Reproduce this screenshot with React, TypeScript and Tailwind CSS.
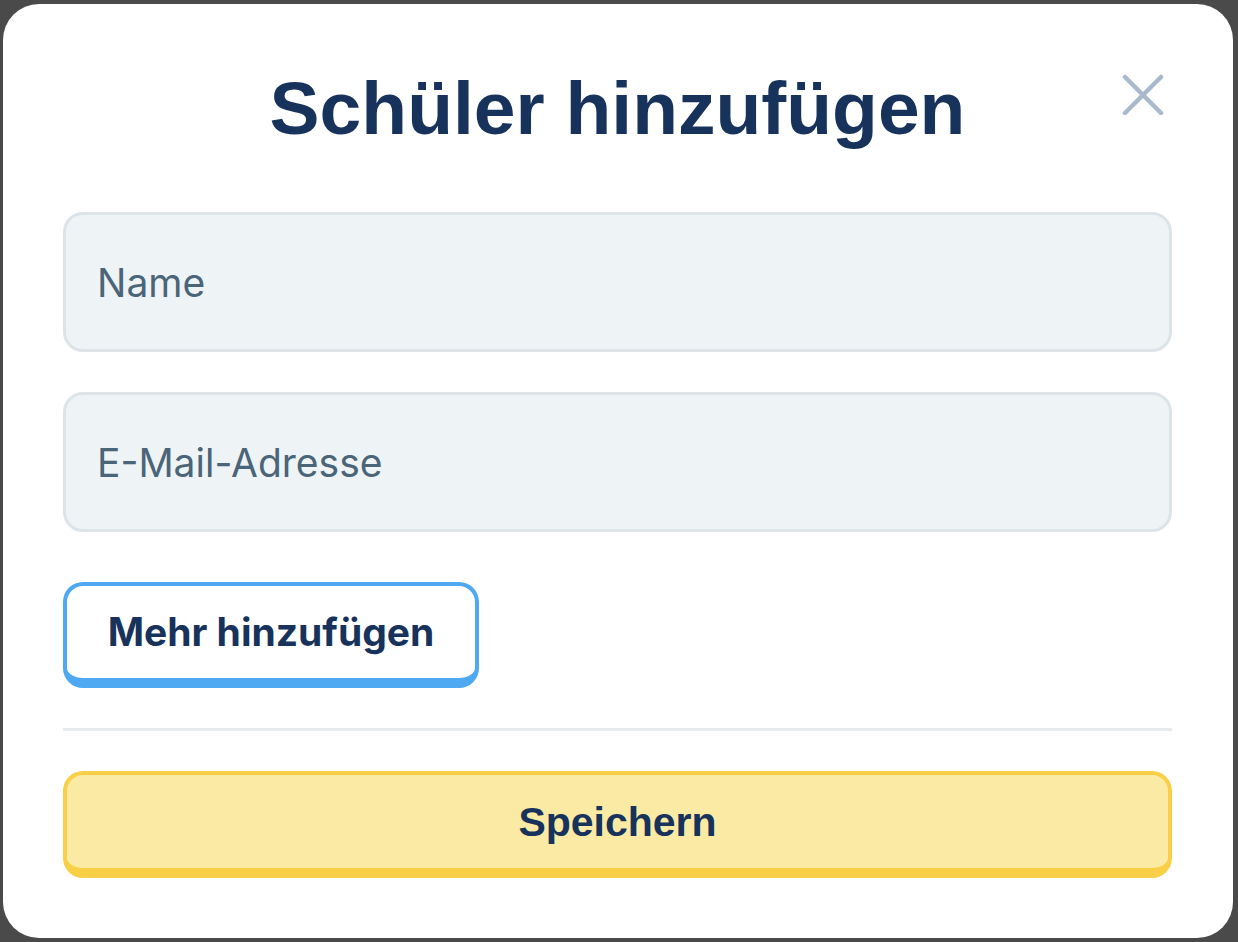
import React from 'react';

const App: React.FC = () => {
  return (
    <div className="w-[1238px] h-[942px] bg-[#4a4a4a] pt-[4px] pl-[3px] pr-[5px] pb-[4px]">
      <div className="relative h-full w-full bg-white rounded-[36px] pt-[67px] pb-[60px] pl-[60px] pr-[61px] flex flex-col">
        <h1
          className="text-center text-[75px] leading-none font-bold text-[#17325b]"
          style={{ fontFamily: '"Liberation Sans", Arial, sans-serif' }}
        >
          Schüler hinzufügen
        </h1>

        <button className="absolute top-[69px] right-[69px] w-[42px] h-[42px]" aria-label="Schließen">
          <svg viewBox="0 0 42 42" className="w-full h-full" fill="none" stroke="#a9b9cd" strokeWidth={4.5} strokeLinecap="round">
            <path d="M3 4 L39 40" />
            <path d="M39 4 L3 40" />
          </svg>
        </button>

        <div className="mt-[66px] flex flex-col gap-[40px]" style={{ fontFamily: 'Inter, sans-serif' }}>
          <input
            type="text"
            placeholder="Name"
            className="h-[140px] w-full rounded-[20px] border-[3px] border-[#dde4e8] bg-[#eef3f6] pl-[31px] text-[39px] text-[#17325b] placeholder-[#4a6478] outline-none"
          />
          <input
            type="email"
            placeholder="E-Mail-Adresse"
            className="h-[140px] w-full rounded-[20px] border-[3px] border-[#dde4e8] bg-[#eef3f6] pl-[31px] text-[39px] text-[#17325b] placeholder-[#4a6478] outline-none"
          />
        </div>

        <div className="mt-[50px]">
          <button
            className="h-[106px] w-[416px] rounded-[20px] border-[4px] border-b-[10px] border-[#4ea8f2] bg-white text-[39px] font-bold text-[#17325b]"
            style={{ fontFamily: 'Inter, sans-serif' }}
          >
            Mehr hinzufügen
          </button>
        </div>

        <div className="mt-[40px] h-[3px] w-full bg-[#e6ebee]"></div>

        <button
          className="mt-[40px] h-[107px] w-full rounded-[20px] border-[4px] border-b-[10px] border-[#f8cf47] bg-[#fbeaa3] pt-[2px] text-[41px] font-bold text-[#17325b]"
          style={{ fontFamily: '"Liberation Sans", Arial, sans-serif' }}
        >
          Speichern
        </button>
      </div>
    </div>
  );
};

export default App;
